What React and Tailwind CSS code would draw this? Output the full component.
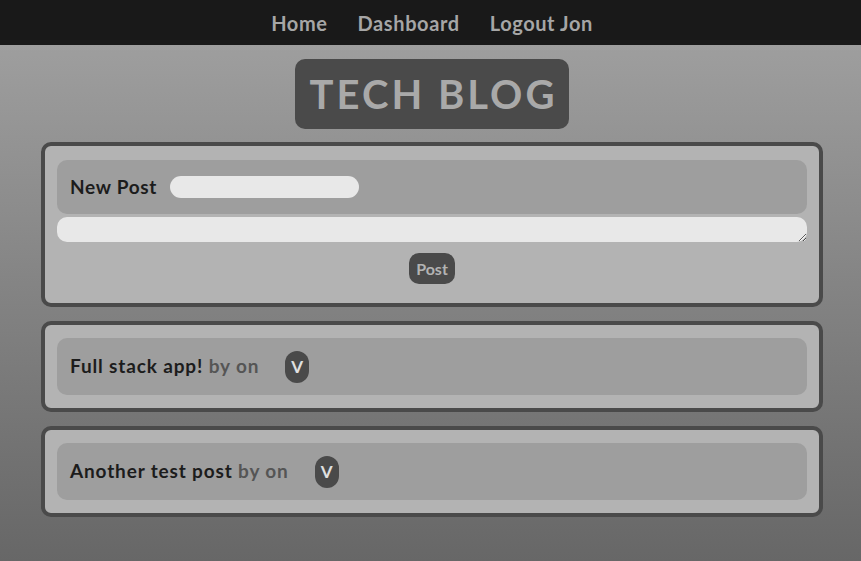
import { useState } from "react";

const posts = [
	{ id: 1, title: "Full stack app!" },
	{ id: 2, title: "Another test post" },
];

const font = { fontFamily: "Lato, 'Open Sans', sans-serif" };

const App = () => {
	const [title, setTitle] = useState("");
	const [body, setBody] = useState("");

	return (
		<div
			className="min-h-[561px] flex flex-col bg-gradient-to-b from-[#a3a3a3] to-[#676767]"
			style={font}
		>
			<nav className="h-[45px] bg-[#191919] flex items-center justify-center gap-[30px] pl-[3px] text-[20px] font-bold tracking-[0.6px] text-[#a6a6a6]">
				<a href="#">Home</a>
				<a href="#">Dashboard</a>
				<a href="#">Logout Jon</a>
			</nav>

			<header className="flex justify-center pt-[14px] pb-[13px] pl-[3px]">
				<h1 className="bg-[#4a4a4a] text-[#a9a9a9] rounded-[10px] w-[274px] h-[70px] flex items-center justify-center text-[40px] font-bold tracking-[3px] pl-[3px]">
					TECH BLOG
				</h1>
			</header>

			<main className="ml-[41px] mr-[38px] flex flex-col gap-[14px] pb-[44px]">
				<section className="border-4 border-[#4a4a4a] bg-[#b3b3b3] rounded-[10px] px-[12px] pt-[14px] pb-[19px]">
					<div className="bg-[#9e9e9e] rounded-[10px] h-[54px] flex items-center pl-[13px] gap-[13px]">
						<span className="text-[19px] font-bold tracking-[0.7px] text-[#1c1c1c]">New Post</span>
						<input
							className="w-[189px] h-[22px] rounded-full bg-[#e8e8e8] outline-none px-2"
							value={title}
							onChange={(e) => setTitle(e.target.value)}
						/>
					</div>
					<textarea
						rows={1}
						className="mt-[3px] block w-full h-[25px] rounded-[10px] bg-[#e8e8e8] outline-none px-2"
						value={body}
						onChange={(e) => setBody(e.target.value)}
					/>
					<div className="flex justify-center mt-[11px]">
						<button className="bg-[#4a4a4a] text-[#b3b3b3] rounded-[10px] w-[46px] h-[31px] text-[16px] font-bold">
							Post
						</button>
					</div>
				</section>

				{posts.map((post) => (
					<section
						key={post.id}
						className="border-4 border-[#4a4a4a] bg-[#b3b3b3] rounded-[10px] px-[12px] py-[13px]"
					>
						<div className="bg-[#9e9e9e] rounded-[10px] h-[57px] flex items-center pl-[13px]">
							<span className="text-[19px] font-bold tracking-[0.85px] text-[#1c1c1c]">
								{post.title} <span className="text-[#555555]">by on</span>
							</span>
							<button className="ml-[26px] bg-[#4a4a4a] text-[#e0e0e0] rounded-full w-[24px] h-[32px] text-[17px] font-bold">
								V
							</button>
						</div>
					</section>
				))}
			</main>
		</div>
	);
};

export default App;
